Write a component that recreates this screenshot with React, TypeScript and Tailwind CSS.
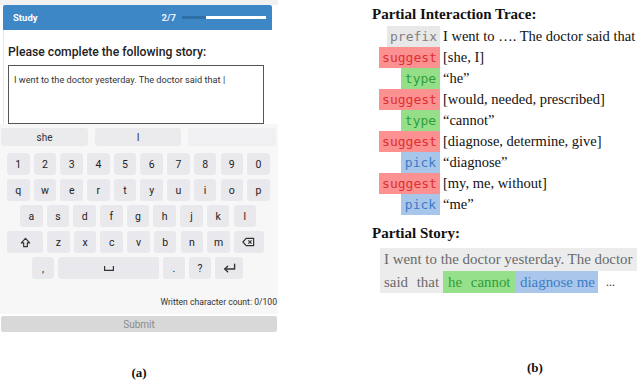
import React from "react";

const serif = { fontFamily: '"Liberation Serif", "DejaVu Serif", serif' };
const mono = { fontFamily: '"DejaVu Sans Mono", "Liberation Mono", monospace' };
const roboto = { fontFamily: 'Roboto, "Liberation Sans", sans-serif' };

function Key({ w = 22.6, children }: { w?: number; children?: React.ReactNode }) {
  return (
    <div
      className="h-[22px] rounded-[3px] bg-[#e9e9ed] flex items-center justify-center text-[10.5px] text-[#222]"
      style={{ width: w }}
    >
      {children}
    </div>
  );
}

type Kind = "prefix" | "suggest" | "type" | "pick";
const labelCls: Record<Kind, string> = {
  prefix: "bg-[#e8e8e8] text-[#808080] w-[53px]",
  suggest: "bg-[#fb9191] text-[#e02f33] w-[61px]",
  type: "bg-[#95df89] text-[#2f9d3a] w-[39px]",
  pick: "bg-[#a8c5ea] text-[#3a7cc7] w-[39px]",
};

const rows: [Kind, string][] = [
  ["prefix", "I went to …. The doctor said that"],
  ["suggest", "[she, I]"],
  ["type", "“he”"],
  ["suggest", "[would, needed, prescribed]"],
  ["type", "“cannot”"],
  ["suggest", "[diagnose, determine, give]"],
  ["pick", "“diagnose”"],
  ["suggest", "[my, me, without]"],
  ["pick", "“me”"],
];

export default function App() {
  const num = ["1", "2", "3", "4", "5", "6", "7", "8", "9", "0"];
  const q = ["q", "w", "e", "r", "t", "y", "u", "i", "o", "p"];
  const a = ["a", "s", "d", "f", "g", "h", "j", "k", "l"];
  const z = ["z", "x", "c", "v", "b", "n", "m"];
  return (
    <div className="w-[640px] h-[383px] bg-white flex overflow-hidden">
      {/* Left phone */}
      <div className="w-[278px] flex flex-col" style={roboto}>
        <div className="h-[5px] bg-[#f1f1f1]" />
        <div className="ml-[3px] w-[269px] h-[26px] bg-[#3e87c7] rounded-t-[2px] flex items-center pl-[10px]">
          <span className="text-[9.5px] font-bold text-white">Study</span>
          <span className="ml-[124px] text-[9.5px] font-bold text-white/90">2/7</span>
          <div className="ml-[6px] w-[84px] h-[3px] flex">
            <div className="w-[24px] h-full bg-[#2f6fa8]" />
            <div className="flex-1 h-full bg-white" />
          </div>
        </div>
        <div className="ml-[3px] w-[269px] h-[95px] bg-white border-l border-[#e5e5e5] pt-[14px] pl-[4px]">
          <div className="text-[12.2px] leading-[16px] text-[#222] font-medium">Please complete the following story:</div>
          <div className="mt-[5px] w-[256px] h-[59px] border border-[#555] px-[5px] pt-[7px] text-[9.2px] text-[#333]">
            I went to the doctor yesterday. The doctor said that |
          </div>
        </div>
        <div className="h-[193px] bg-[#f7f7f7] flex flex-col pt-[4px]">
          <div className="flex gap-[7px] pl-[1px]">
            <div className="w-[87px] h-[18px] rounded-[3px] bg-[#ebebee] flex items-center justify-center text-[10px] text-[#333]">she</div>
            <div className="w-[86px] h-[18px] rounded-[3px] bg-[#ebebee] flex items-center justify-center text-[10px] text-[#333]">I</div>
            <div className="w-[88px] h-[18px] rounded-[3px] bg-[#f0f0f2]" />
          </div>
          <div className="mt-[7px] flex gap-[4.1px] pl-[7px]">
            {num.map((k) => <Key key={k}>{k}</Key>)}
          </div>
          <div className="mt-[4px] flex gap-[4.1px] pl-[7px]">
            {q.map((k) => <Key key={k}>{k}</Key>)}
          </div>
          <div className="mt-[4px] flex gap-[4.1px] pl-[20px]">
            {a.map((k) => <Key key={k}>{k}</Key>)}
          </div>
          <div className="mt-[4px] flex gap-[4.1px] pl-[7px]">
            <Key w={36}>
              <svg width="11" height="11" viewBox="0 0 12 12" fill="none" stroke="#333" strokeWidth="1.3" strokeLinejoin="round">
                <path d="M6 1.5 L1.5 6.5 H4 V10.5 H8 V6.5 H10.5 Z" />
              </svg>
            </Key>
            {z.map((k) => <Key key={k}>{k}</Key>)}
            <Key w={30}>
              <svg width="13" height="10" viewBox="0 0 14 10" fill="none" stroke="#333" strokeWidth="1.3" strokeLinejoin="round">
                <path d="M4.5 1 H12.5 V9 H4.5 L1 5 Z" />
                <path d="M6.8 3.2 L10.2 6.8 M10.2 3.2 L6.8 6.8" />
              </svg>
            </Key>
          </div>
          <div className="mt-[4px] flex gap-[4px] pl-[32px]">
            <Key w={22}>,</Key>
            <Key w={101}>
              <svg width="10" height="5" viewBox="0 0 10 5" fill="none" stroke="#333" strokeWidth="1.2">
                <path d="M0.6 0 V4.4 H9.4 V0" />
              </svg>
            </Key>
            <Key w={22}>.</Key>
            <Key w={22}>?</Key>
            <Key w={28}>
              <svg width="13" height="10" viewBox="0 0 14 10" fill="none" stroke="#333" strokeWidth="1.5" strokeLinecap="round" strokeLinejoin="round">
                <path d="M12.5 1 V6 H2" />
                <path d="M5 3 L2 6 L5 9" />
              </svg>
            </Key>
          </div>
          <div className="mt-[17px] text-right text-[8.6px] text-[#333] pr-[1px]">Written character count: 0/100</div>
        </div>
        <div className="mt-[2px] ml-[1px] w-[276px] h-[17px] rounded-[2px] bg-[#d8d8d8] flex items-center justify-center text-[10px] text-[#8a8a8a]">Submit</div>
        <div className="mt-[31px] text-center text-[13px] font-bold text-[#111]" style={serif}>(a)</div>
      </div>

      {/* Right panel */}
      <div className="ml-[94px] w-[268px] flex flex-col" style={serif}>
        <div className="mt-[5px] text-[15px] leading-[18px] font-bold text-[#111]">Partial Interaction Trace:</div>
        <div className="mt-[3px] flex flex-col">
          {rows.map(([k, t], i) => (
            <div key={i} className="flex h-[21px]">
              <div className="w-[68px] flex justify-end">
                <div className={`h-full flex items-center justify-center text-[13px] ${labelCls[k]}`} style={mono}>{k}</div>
              </div>
              <div className="ml-[3px] text-[14.5px] leading-[21px] text-[#111] whitespace-nowrap">{t}</div>
            </div>
          ))}
        </div>
        <div className="mt-[9px] text-[15px] leading-[18px] font-bold text-[#111]">Partial Story:</div>
        <div className="mt-[6px] ml-[8px] text-[14.9px] leading-[22.5px] text-[#6a6a6a]">
          <div className="w-[257px] bg-[#ececec] pl-[4px] whitespace-nowrap">I went to the doctor yesterday. The doctor</div>
          <div className="flex items-stretch">
            <div className="w-[63px] bg-[#ececec] pl-[4px] whitespace-nowrap [word-spacing:5px]">said that</div>
            <div className="w-[72px] bg-[#97e08b] text-[#2f9d3a] pl-[5px] whitespace-nowrap [word-spacing:5px]">he cannot</div>
            <div className="w-[83px] bg-[#aac6ea] text-[#3b7dc8] pl-[5px] whitespace-nowrap">diagnose me</div>
            <div className="pl-[8px] text-[#333] text-[12px]">...</div>
          </div>
        </div>
        <div className="mt-[65px] ml-[155px] text-[13px] font-bold text-[#111]">(b)</div>
      </div>
    </div>
  );
}
